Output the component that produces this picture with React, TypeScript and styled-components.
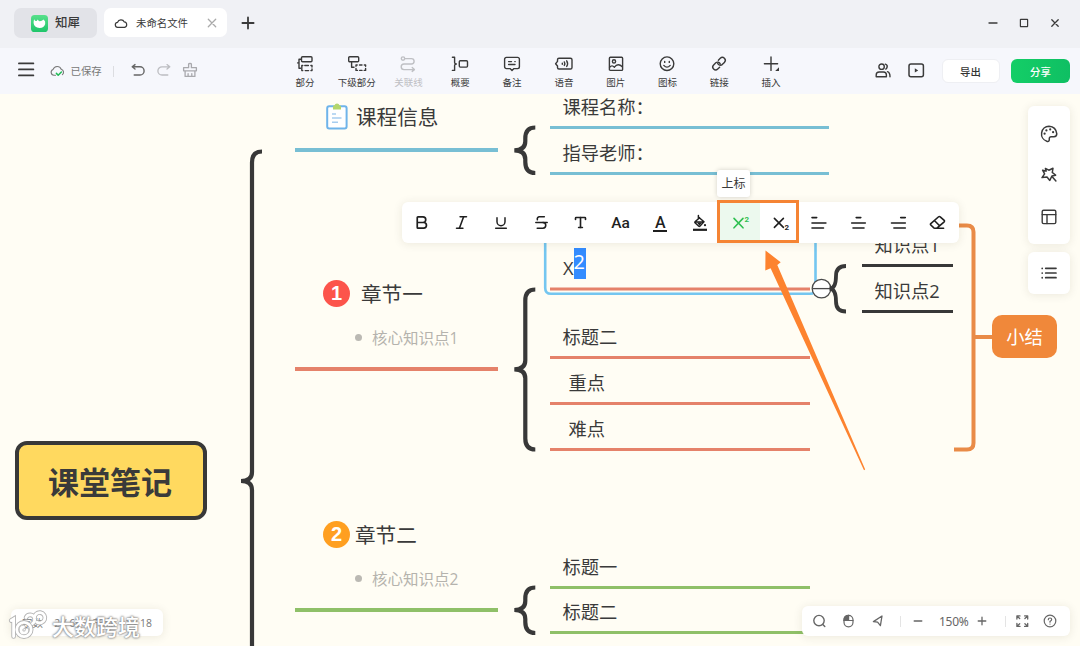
import type { ReactNode } from "react";
import styled, { createGlobalStyle } from "styled-components";
import { Bold, Italic, Strikethrough, Type, Underline } from "lucide-react";

const BLUE = "#78bfd4";
const RED = "#e5826a";
const GREEN = "#8fc068";
const DARK = "#383838";

// height of title bar + toolbar, board coordinates are window based
const BOARD_TOP = 94;

type IconProps = { w?: number; h?: number; sw?: number; children: ReactNode };

const Icon = ({ w = 20, h = 20, sw = 1.4, children }: IconProps) => (
  <svg
    width={w}
    height={h}
    viewBox={`0 0 ${w} ${h}`}
    fill="none"
    stroke="currentColor"
    strokeWidth={sw}
    strokeLinecap="round"
    strokeLinejoin="round"
  >
    {children}
  </svg>
);

const tools = [
  {
    label: "部分",
    icon: (
      <>
        <rect x="6.5" y="2.7" width="10.5" height="5" rx="1" />
        <path d="M6.3 5.2H4V14.2H5.5M3.8 8.9H2.6" />
        <path d="M7.8 11.5H6.8V16.6H7.8M9.8 11.5H13.4M15.9 11.5H17V13M17 15V16.6H15.9M10.2 16.6H13.6" />
      </>
    ),
  },
  {
    label: "下级部分",
    icon: (
      <>
        <rect x="1.7" y="2.7" width="10" height="5" rx="1" />
        <path d="M4.6 7.7V13.3H7" />
        <path d="M10.2 11H9V12.3M9 14.5V16.4H10.5M12.5 11H15M17.3 11H18.6V12.3M18.6 14.5V16.4H17.2M12.7 16.4H15" />
      </>
    ),
  },
  {
    label: "关联线",
    muted: true,
    icon: (
      <>
        <circle cx="5" cy="4.6" r="1.7" />
        <path d="M6.8 4.6H13.4A2.7 2.7 0 0 1 13.4 10H6A2.7 2.7 0 0 0 6 15.6H16.2M14.2 13.6L16.4 15.6L14.2 17.4" />
      </>
    ),
  },
  {
    label: "概要",
    icon: (
      <>
        <path d="M2.4 3.2H4.6V8.5Q4.6 10 6.4 10Q4.6 10 4.6 11.5V16.4H2.4" />
        <rect x="9.3" y="6.8" width="8.2" height="6.3" rx="1" />
      </>
    ),
  },
  {
    label: "备注",
    icon: (
      <>
        <path d="M4.4 3.4H15.6A1.8 1.8 0 0 1 17.4 5.2V12.8A1.8 1.8 0 0 1 15.6 14.6H12L10 16.6L8 14.6H4.4A1.8 1.8 0 0 1 2.6 12.8V5.2A1.8 1.8 0 0 1 4.4 3.4Z" />
        <path d="M6.6 7.6H9.5M6.6 10.5H13M12.8 7.6H13.2" />
      </>
    ),
  },
  {
    label: "语音",
    icon: (
      <>
        <path d="M5 4.2H16.4A1.6 1.6 0 0 1 18 5.8V13.4A1.6 1.6 0 0 1 16.4 15H5A1.5 1.5 0 0 1 3.5 13.5V12L1.6 9.7L3.5 7.4V5.7A1.5 1.5 0 0 1 5 4.2Z" />
        <path d="M8.3 9.1V10.3M10.3 7.9Q11.3 9.6 10.3 11.4M12.7 6.8Q14.5 9.6 12.7 12.4" />
      </>
    ),
  },
  {
    label: "图片",
    icon: (
      <>
        <rect x="3.4" y="3.2" width="13.2" height="13.2" rx="1" />
        <circle cx="8" cy="7.4" r="1.6" />
        <path d="M3.6 13.2Q6 10.5 8.4 13.2Q12 8.4 16.3 12.8" />
      </>
    ),
  },
  {
    label: "图标",
    icon: (
      <>
        <circle cx="10" cy="9.7" r="6.8" />
        <path d="M7.7 7.5V8.4M12.3 7.5V8.4M6.8 11.4Q10 14.9 13.2 11.4" />
      </>
    ),
  },
  {
    label: "链接",
    icon: (
      <g transform="rotate(-45 10 9.7)">
        <path d="M8 12.6H5.3A2.9 2.9 0 0 1 5.3 6.8H8.4A2.9 2.9 0 0 1 10.7 10.8" />
        <path d="M12 6.8H14.7A2.9 2.9 0 0 1 14.7 12.6H11.6A2.9 2.9 0 0 1 9.3 8.6" />
      </g>
    ),
  },
  {
    label: "插入",
    icon: (
      <>
        <path d="M10 3V16.4M3.4 9.7H16.6" />
        <path d="M18 13.2V17H14.2Z" fill="currentColor" stroke="none" />
      </>
    ),
  },
];

const leaves = [
  { x: 550, y: 127, w: 279, text: "课程名称：", color: BLUE },
  { x: 550, y: 173, w: 279, text: "指导老师：", color: BLUE },
  { x: 550, y: 357, w: 260, text: "标题二", color: RED },
  { x: 550, y: 403, w: 260, text: "重点", color: RED, indent: 18.5 },
  { x: 550, y: 449, w: 260, text: "难点", color: RED, indent: 18.5 },
  { x: 550, y: 587, w: 260, text: "标题一", color: GREEN },
  { x: 550, y: 632, w: 260, text: "标题二", color: GREEN },
  { x: 862, y: 265, w: 91, text: "知识点1", color: DARK },
  { x: 862, y: 311, w: 91, text: "知识点2", color: DARK },
];

const brace = (x: number, top: number, mid: number, bottom: number) =>
  `M${x + 10} ${top}Q${x} ${top} ${x} ${top + 11}V${mid - 9}Q${x} ${mid} ${x - 11} ${mid}` +
  `Q${x} ${mid} ${x} ${mid + 9}V${bottom - 11}Q${x} ${bottom} ${x + 10} ${bottom}`;

const Lines = () => (
  <LinesSvg viewBox="0 94 1080 552" fill="none">
    <g stroke={DARK} strokeWidth="4.2">
      <path d={brace(252, 151.5, 481, 810)} />
      <path d={brace(525.3, 127.5, 150.3, 173)} />
      <path d={brace(525.3, 289.5, 369.3, 449.5)} />
      <path d={brace(525.3, 587.5, 610, 633)} />
    </g>
    <path d="M954 449.5H967Q973.5 449.5 973.5 443V232Q973.5 225.5 967 225.5H955M973.5 337H993" stroke="#e98b47" strokeWidth="4" />
    <path d="M545.2 230V288Q545.2 293.8 551 293.8H810Q815.5 293.8 815.5 288V230" stroke="#74c6f0" strokeWidth="2.6" />
    <path d="M550 289H810" stroke={RED} strokeWidth="2.8" />
    <circle cx="821.5" cy="288.6" r="9.3" fill="#fff" stroke="#4a4a4a" strokeWidth="1.3" />
    <path d="M812.5 288.6H830.5" stroke="#4a4a4a" strokeWidth="1.3" />
    <path
      d="M846 266Q836 266 836 276Q836 288.6 829.5 288.6Q836 288.6 836 301.5Q836 311.5 846 311.5"
      stroke={DARK}
      strokeWidth="3.8"
    />
  </LinesSvg>
);

const Clipboard = () => (
  <svg width="22" height="27" viewBox="0 0 22 27" fill="none">
    <rect x="1.2" y="3.2" width="19.4" height="22.4" rx="2" fill="#fff" stroke="#6fb4ea" strokeWidth="2" />
    <path d="M7 6.4V3.6Q7 2.6 8.4 2.6Q9 .4 11 .4Q13 .4 13.6 2.6Q15 2.6 15 3.6V6.4Z" fill="#b4d66b" />
    <path d="M6 11H10M6 15H15.5M6 19.3H12" stroke="#a6cdf0" strokeWidth="1.5" />
  </svg>
);

function TitleBar() {
  return (
    <TitleRow>
      <HomeTab>
        <svg width="17" height="17" viewBox="0 0 17 17">
          <defs>
            <linearGradient id="logo" x1="0" y1="0" x2="0" y2="1">
              <stop offset="0" stopColor="#57e08a" />
              <stop offset="1" stopColor="#1fc56b" />
            </linearGradient>
          </defs>
          <rect width="17" height="17" rx="3.6" fill="url(#logo)" />
          <path d="M3.2 4.2Q4.2 6.8 5.9 5.8L6.7 4.5L7.9 6Q10.3 6.6 12.6 4.4Q14.8 6 14.2 9Q13 13 8.6 13Q3 12.6 2.6 8Q2.5 6 3.2 4.2Z" fill="#fff" />
        </svg>
        <b>知犀</b>
      </HomeTab>
      <FileTab>
        <Icon w={14} h={12} sw={1.2}>
          <path d="M4 10.3A2.5 2.5 0 0 1 3.6 5.3A3.6 3.6 0 0 1 10.3 4.9A2.75 2.75 0 0 1 10.6 10.3Z" />
        </Icon>
        <span>未命名文件</span>
        <Close>
          <Icon w={10} h={10} sw={1.3}>
            <path d="M1.3 1.3L8.7 8.7M8.7 1.3L1.3 8.7" />
          </Icon>
        </Close>
      </FileTab>
      <NewTab>
        <Icon w={14} h={14} sw={1.8}>
          <path d="M7 1.4V12.6M1.4 7H12.6" />
        </Icon>
      </NewTab>
      <WindowButtons>
        <Icon w={12} h={12} sw={1.3}>
          <path d="M2 6H10" />
        </Icon>
        <Icon w={12} h={12} sw={1.2}>
          <rect x="2.4" y="2.4" width="7.2" height="7.2" rx=".3" />
        </Icon>
        <Icon w={12} h={12} sw={1.3}>
          <path d="M2.8 2.8L9.2 9.2M9.2 2.8L2.8 9.2" />
        </Icon>
      </WindowButtons>
    </TitleRow>
  );
}

function Toolbar() {
  return (
    <ToolRow>
      <FileActions>
        <Icon w={18} sw={1.7}>
          <path d="M1.9 2.4H16.4M1.9 8.4H16.4M1.9 14.4H16.4" />
        </Icon>
        <Saved>
          <Icon w={16} sw={1.1}>
            <path d="M6.5 14.2H4.9A3 3 0 0 1 4.1 8.4A4.3 4.3 0 0 1 12.2 8.2A3.1 3.1 0 0 1 13.4 13.6" />
            <path d="M7.4 12.4L9.2 14.2L12.4 11" stroke="#20bb55" strokeWidth="1.5" />
          </Icon>
          <span>已保存</span>
        </Saved>
        <Separator />
        <History>
          <Icon w={16}>
            <path d="M5 3.6L2.2 5.8L5 8M2.5 5.8H10A4.1 4.1 0 0 1 10 14H4.2" />
          </Icon>
          <Faded>
            <Icon w={16} sw={1.3}>
              <path d="M11 3.6L13.8 5.8L11 8M13.5 5.8H6A4.1 4.1 0 0 0 6 14H11.8" />
            </Icon>
          </Faded>
          <Faded $dark>
            <Icon w={16} sw={1.3}>
              <path d="M6.6 6.7V3.2Q6.6 2.5 8 2.5Q9.4 2.5 9.4 3.2V6.7H14.4V9.8H1.6V6.7H6.6M3.1 9.9V15.4H12.9V9.9M6.1 15.4V12.6M9.8 15.4V12.6" />
            </Icon>
          </Faded>
        </History>
      </FileActions>
      <Tools>
        {tools.map((tool) => (
          <Tool key={tool.label} $muted={tool.muted}>
            <Icon>{tool.icon}</Icon>
            <span>{tool.label}</span>
          </Tool>
        ))}
      </Tools>
      <ShareActions>
        <Icon w={18} sw={1.4}>
          <circle cx="8.6" cy="5.7" r="2.7" />
          <path d="M3.2 15.7V13.9Q3.2 11 6.2 11H10.4Q13.4 11 13.4 13.9V15.7ZM12.4 3.1Q14.7 3.9 14.1 6.2Q13.8 7.5 12.8 8.1M14.5 10.7Q17 11.6 17 15.7" />
        </Icon>
        <Icon w={18} sw={1.5}>
          <rect x="2" y="3.1" width="14.4" height="12.6" rx="2" />
          <path d="M7.8 7.2L11.2 9.4L7.8 11.6Z" fill="currentColor" stroke="none" />
        </Icon>
        <Export>导出</Export>
        <Share>分享</Share>
      </ShareActions>
    </ToolRow>
  );
}

function FormatBar() {
  return (
    <FormatRow>
      <Format><Bold size={17} strokeWidth={2.4} /></Format>
      <Format><Italic size={17} strokeWidth={2.2} /></Format>
      <Format><Underline size={16} strokeWidth={2.2} /></Format>
      <Format><Strikethrough size={17} strokeWidth={2.2} /></Format>
      <Format><Type size={15} strokeWidth={2.6} /></Format>
      <Format>Aa</Format>
      <Format><FontColor>A</FontColor></Format>
      <Format>
        <Icon sw={1.5}>
          <path d="M8.4 2.6V5.2M8.4 4L14 8.8L9.8 13.2Q9.3 13.6 8.8 13.2L5 9.7Q4.6 9.2 5 8.8L9.6 4.8M5 9H13.4" />
          <path d="M7 9.6H12.2L9.3 12.4Z" fill="currentColor" stroke="none" />
          <circle cx="15" cy="12.2" r="1.1" fill="currentColor" stroke="none" />
          <path d="M3 16.8H17" strokeWidth="2.2" strokeLinecap="butt" />
        </Icon>
      </Format>
      <Format $active>
        <Script>
          <path d="M4 5.4L13 14.8M13 5.4L4 14.8" />
          <text x="14.6" y="8.6">2</text>
        </Script>
      </Format>
      <Format>
        <Script>
          <path d="M4.4 5.4L13.4 14.4M13.4 5.4L4.4 14.4" />
          <text x="14.6" y="16.6">2</text>
        </Script>
      </Format>
      <Format><Icon sw={1.6}><path d="M3 4.6H7.7M3 10H16.9M3 15H14.5" /></Icon></Format>
      <Format><Icon sw={1.6}><path d="M7.2 4.6H11.8M2.7 10H16.3M4 15H15" /></Icon></Format>
      <Format><Icon sw={1.6}><path d="M11.7 4.6H16.3M2.5 10H16.3M4.9 15H16.3" /></Icon></Format>
      <Format>
        <Icon sw={1.6}>
          <path d="M9.3 4L1.8 10.6Q1.1 11.3 1.8 12L4.6 14.7Q5 15.2 5.8 15.2H7.9L15.2 8.8Q15.9 8.1 15.2 7.4L11.2 3.8Q10.3 3.2 9.3 4ZM5.4 7.5L10.6 12.8M7.9 15.2H14.6" />
        </Icon>
      </Format>
    </FormatRow>
  );
}

function SidePanels() {
  return (
    <Side>
      <Panel $tall>
        <Icon sw={1.5}>
          <path d="M10 2.2A7.7 7.7 0 0 0 7.8 17.2Q10.4 18 10.3 15.4Q10 12.8 12.3 12.7H15Q17.8 12.7 17.8 9.8Q17 2.6 10 2.2Z" />
          <path d="M5.6 9.6V9.7M7.4 6.3V6.4M11.2 5.4V5.5M14.1 8.1V8.2" strokeWidth="2.2" />
        </Icon>
        <Icon sw={1.5}>
          <path d="M6.4 3.4L9.8 5.2L14 3.2L13.3 7.5L16.6 10.2L12.9 11L10.8 15.4L8 12L3 12.6L5.6 8.9L3.6 5.2L7.2 6ZM13.4 12L16.9 16" />
        </Icon>
        <Icon>
          <rect x="3.2" y="3.2" width="13.6" height="13.4" rx="1.4" />
          <path d="M3.2 7.6H16.8M8 7.6V16.6" />
        </Icon>
      </Panel>
      <Panel>
        <Icon sw={1.7}>
          <path d="M6.7 5.3H17M6.7 10H17M6.7 14.7H17M3.2 5.3V5.4M3.2 10V10.1M3.2 14.7V14.8" />
        </Icon>
      </Panel>
    </Side>
  );
}

function ZoomBar() {
  return (
    <ZoomRow>
      <Icon w={29} sw={1.4}>
        <circle cx="14" cy="9.6" r="5.2" />
        <path d="M17.8 13.4L19.8 15.4" />
      </Icon>
      <Icon w={29} sw={1.2}>
        <rect x="10" y="4.3" width="9" height="11.5" rx="4.5" />
        <path d="M10 9.5H19M14.5 4.3V9.5" />
        <path d="M10 9.5Q9.8 4.6 14.5 4.4V9.5Z" fill="currentColor" />
      </Icon>
      <Icon w={29} sw={1.3}>
        <path d="M19 5L17.4 14.6L14.6 11.2L10.4 10.6Z" />
      </Icon>
      <ZoomLevel>
        <Icon w={12} sw={1.3}><path d="M2.2 10H9.8" /></Icon>
        <span>150%</span>
        <Icon w={12} sw={1.3}><path d="M2.2 10H9.8M6 6.2V13.8" /></Icon>
      </ZoomLevel>
      <Icon w={28} sw={1.3}>
        <path d="M8.9 8V4.9H12M9.2 5.2L11.7 7.5M16.6 4.9H19.7V8M19.4 5.2L16.9 7.5M8.9 12.3V15.4H12M9.2 15.1L11.7 12.8M16.6 15.4H19.7V12.3M19.4 15.1L16.9 12.8" />
      </Icon>
      <Icon w={28} sw={1.2}>
        <circle cx="14" cy="10" r="5.8" />
        <path d="M12.3 8.7Q12.3 7 14 7Q15.7 7 15.7 8.5Q15.7 9.5 14 10.4V11.2M14 13V13.1" />
      </Icon>
    </ZoomRow>
  );
}

function App() {
  return (
    <Page>
      <GlobalStyle />
      <TitleBar />
      <Toolbar />
      <Board>
        <Lines />
        {leaves.map((leaf) => (
          <Leaf key={leaf.y} $x={leaf.x} $y={leaf.y} $w={leaf.w} $color={leaf.color} $indent={leaf.indent}>
            {leaf.text}
          </Leaf>
        ))}
        <Formula $x={563} $y={248}>
          X<mark>2</mark>
        </Formula>

        <Branch $x={295} $y={99} $h={53} $color={BLUE}>
          <BranchTitle $pad={31} $gap={8}>
            <Clipboard />
            课程信息
          </BranchTitle>
        </Branch>
        <Branch $x={295} $y={276} $h={95} $color={RED}>
          <BranchTitle $pad={28} $gap={11}>
            <Badge $color="#fc544b">1</Badge>
            章节一
          </BranchTitle>
          <Note>核心知识点1</Note>
        </Branch>
        <Branch $x={295} $y={517} $h={95} $color={GREEN}>
          <BranchTitle $pad={28} $gap={5}>
            <Badge $color="#ff9f20">2</Badge>
            章节二
          </BranchTitle>
          <Note>核心知识点2</Note>
        </Branch>
        <Root $x={15} $y={441}>课堂笔记</Root>
        <Summary $x={992} $y={315}>小结</Summary>

        <FormatBar />
        <Tooltip>上标</Tooltip>
        <Highlight />
        <Arrow viewBox="760 245 110 230">
          <path d="M765.5 250.5L780.7 262.2L777.3 265L865.2 469.6L864 470.2L770.6 268.3L765.3 270.5Z" fill="#fd832f" />
        </Arrow>
        <SidePanels />
        <Counter>
          <span>字数</span>
          <span>2 / 66</span>
          <span>节点</span>
          <span>1 / 18</span>
        </Counter>
        <Watermark>
          <svg width="42" height="34" viewBox="0 0 42 34" fill="none" strokeLinecap="round">
            {["#b4b4b4", "#fff"].map((color, i) => (
              <g key={color} stroke={color} strokeWidth={i ? 2.8 : 4.6}>
                <path d="M3.2 11.5L5.6 10V27.5" />
                <circle cx="16" cy="20.5" r="7.2" />
                <path d="M19 21A3 3 0 1 1 15.5 18" />
                <path d="M18 8.5A4.6 4.6 0 0 1 26.5 9A5.2 5.2 0 1 1 29 13.2M26.5 9Q27.3 13 24.5 14.5" />
              </g>
            ))}
          </svg>
          <span>大数跨境</span>
        </Watermark>
        <ZoomBar />
      </Board>
    </Page>
  );
}

export default App;

const GlobalStyle = createGlobalStyle`
  * {
    box-sizing: border-box;
  }
  body {
    margin: 0;
    font-family: "Open Sans", "Noto Sans CJK SC", sans-serif;
    color: #3a3a3a;
  }
  svg {
    display: block;
    flex-shrink: 0;
  }
`;

const Page = styled.div`
  display: flex;
  flex-direction: column;
  width: 1080px;
  height: 646px;
  overflow: hidden;
`;

const TitleRow = styled.header`
  display: flex;
  align-items: flex-start;
  height: 48px;
  padding: 8px 19px 0 14px;
  background: #f0f1f5;
`;

const HomeTab = styled.div`
  display: flex;
  align-items: center;
  gap: 7px;
  width: 83px;
  height: 30px;
  padding-left: 17px;
  border-radius: 7px;
  background: #e2e3e8;
  font-size: 12.5px;
  line-height: 28px;
  b {
    font-weight: 500;
  }
`;

const FileTab = styled.div`
  display: flex;
  align-items: center;
  width: 123px;
  height: 29px;
  margin-left: 7px;
  padding: 0 10px;
  border-radius: 7px;
  background: #fff;
  font-size: 10.4px;
  span {
    margin-left: 8px;
  }
`;

const Close = styled.div`
  margin-left: auto;
  color: #aaa;
`;

const NewTab = styled.div`
  margin: 8px 0 0 14px;
`;

const WindowButtons = styled.div`
  display: flex;
  gap: 19px;
  margin: 9px 0 0 auto;
`;

const ToolRow = styled.div`
  display: flex;
  align-items: center;
  height: 46px;
  padding: 0 10px 0 17px;
  background: #f6f7fc;
`;

const FileActions = styled.div`
  display: flex;
  align-items: center;
  width: 262px;
`;

const Saved = styled.div`
  display: flex;
  align-items: center;
  gap: 6px;
  margin: 0 11px 0 13.5px;
  color: #777;
  font-size: 10.4px;
  line-height: 20px;
`;

const Separator = styled.div`
  width: 1px;
  height: 11px;
  background: #dcdde1;
`;

const History = styled.div`
  display: flex;
  gap: 10px;
  margin-left: 16px;
  color: #666;
`;

const Faded = styled.div<{ $dark?: boolean }>`
  color: ${({ $dark }) => ($dark ? "#a9a9ad" : "#bcbdc1")};
`;

const Tools = styled.div`
  display: flex;
  padding-top: 2px;
`;

const Tool = styled.div<{ $muted?: boolean }>`
  display: flex;
  flex-direction: column;
  align-items: center;
  gap: 2px;
  width: 51.8px;
  color: ${({ $muted }) => ($muted ? "#bfc0c4" : "#3a3a3a")};
  font-size: 9.5px;
  line-height: 14px;
`;

const ShareActions = styled.div`
  display: flex;
  align-items: center;
  gap: 16.5px;
  margin-left: auto;
`;

const Export = styled.button`
  width: 58px;
  height: 24px;
  margin-right: -5px;
  padding: 0;
  border: 1px solid #eeeff3;
  border-radius: 6px;
  background: #fff;
  color: #333;
  font: 500 10.4px "Noto Sans CJK SC", sans-serif;
`;

const Share = styled(Export)`
  width: 59px;
  margin-right: 0;
  border: 0;
  background: linear-gradient(90deg, #14ce67, #0fbf63);
  color: #fff;
`;

const Board = styled.main`
  position: relative;
  flex: 1;
  overflow: hidden;
  background: #fffdf4;
`;

const LinesSvg = styled.svg`
  position: absolute;
  inset: 0;
  width: 1080px;
  height: 552px;
`;

type At = { $x: number; $y: number };

const Node = styled.div<At>`
  position: absolute;
  left: ${({ $x }) => $x}px;
  top: ${({ $y }) => $y - BOARD_TOP}px;
`;

const Leaf = styled(Node)<{ $w: number; $color: string; $indent?: number }>`
  width: ${({ $w }) => $w}px;
  height: 36px;
  margin-top: -34px;
  padding-left: ${({ $indent = 12.5 }) => $indent}px;
  border-bottom: 3px solid ${({ $color }) => $color};
  font-size: 18.3px;
  line-height: 28px;
  white-space: nowrap;
`;

const Formula = styled(Node)`
  display: flex;
  align-items: flex-start;
  font-size: 18.3px;
  line-height: 40px;
  mark {
    height: 31px;
    width: 12px;
    background: #338cff;
    color: #fff;
    font-size: 20px;
    line-height: 28px;
  }
`;

const Branch = styled(Node)<{ $h: number; $color: string }>`
  width: 203px;
  height: ${({ $h }) => $h}px;
  border-bottom: 4px solid ${({ $color }) => $color};
`;

const BranchTitle = styled.div<{ $pad: number; $gap: number }>`
  display: flex;
  align-items: center;
  gap: ${({ $gap }) => $gap}px;
  height: 35px;
  padding-left: ${({ $pad }) => $pad}px;
  font-size: 20.6px;
  line-height: 34px;
`;

const Badge = styled.span<{ $color: string }>`
  width: 27px;
  height: 27px;
  border-radius: 50%;
  background: ${({ $color }) => $color};
  color: #fff;
  font: bold 20px/27px "Liberation Sans", sans-serif;
  text-align: center;
`;

const Note = styled.div`
  display: flex;
  align-items: center;
  gap: 10px;
  height: 22px;
  margin: 15px 0 0 60px;
  color: #b5b3ad;
  font-size: 15.5px;
  &::before {
    content: "";
    width: 7px;
    height: 7px;
    border-radius: 50%;
    background: #bbb9b3;
  }
`;

const Root = styled(Node)`
  width: 192px;
  height: 79px;
  padding-right: 2px;
  border: 4px solid ${DARK};
  border-radius: 12px;
  background: #ffd95f;
  font-size: 31px;
  font-weight: bold;
  line-height: 74px;
  text-align: center;
`;

const Summary = styled(Node)`
  width: 65px;
  height: 43px;
  border-radius: 10px;
  background: #f0883a;
  color: #fff;
  font-size: 18.3px;
  line-height: 43px;
  text-align: center;
`;

const Floating = styled.div`
  position: absolute;
  background: #fff;
  border-radius: 6px;
  box-shadow: 0 1px 10px rgba(60, 50, 20, 0.1);
`;

const FormatRow = styled(Floating)`
  display: flex;
  left: 402px;
  top: 108px;
  height: 41px;
`;

const Format = styled.div<{ $active?: boolean }>`
  display: flex;
  align-items: center;
  justify-content: center;
  width: 39.75px;
  background: ${({ $active }) => ($active ? "#ecf9ee" : "none")};
  color: ${({ $active }) => ($active ? "#2fc052" : "#1f1f1f")};
  font: 500 15.5px Roboto, sans-serif;
`;

const FontColor = styled.span`
  width: 14px;
  margin-top: 2px;
  border-bottom: 2px solid #1f1f1f;
  font-size: 16px;
  line-height: 14px;
  text-align: center;
`;

const Script = styled.svg.attrs({ viewBox: "0 0 20 20" })`
  width: 20px;
  height: 20px;
  overflow: visible;
  fill: none;
  stroke: currentColor;
  stroke-width: 1.6;
  stroke-linecap: round;
  text {
    fill: currentColor;
    stroke: none;
    font: bold 8px Roboto, sans-serif;
  }
`;

const Tooltip = styled(Floating)`
  left: 717px;
  top: 76px;
  width: 33px;
  height: 27px;
  border-radius: 3px;
  box-shadow: 0 0 5px rgba(0, 0, 0, 0.18);
  font-size: 12px;
  line-height: 28px;
  text-align: center;
`;

const Highlight = styled.div`
  position: absolute;
  left: 717px;
  top: 106px;
  width: 82px;
  height: 43px;
  border: 3px solid #f58434;
`;

const Arrow = styled.svg`
  position: absolute;
  left: 760px;
  top: 151px;
  width: 110px;
  height: 230px;
`;

const Side = styled.aside`
  position: absolute;
  right: 10px;
  top: 12px;
  display: flex;
  flex-direction: column;
  gap: 8px;
`;

const Panel = styled(Floating)<{ $tall?: boolean }>`
  position: static;
  display: flex;
  flex-direction: column;
  align-items: center;
  justify-content: center;
  gap: 21.5px;
  width: 42px;
  height: ${({ $tall }) => ($tall ? 138 : 42)}px;
`;

const Counter = styled(Floating)`
  display: flex;
  align-items: center;
  justify-content: space-between;
  left: 11px;
  bottom: 10px;
  width: 152px;
  height: 27px;
  padding: 0 11px;
  color: #777;
  font-size: 10.4px;
`;

const Watermark = styled.div`
  position: absolute;
  left: 8px;
  bottom: 3px;
  display: flex;
  align-items: center;
  gap: 2px;
  color: #fff;
  font-size: 22px;
  font-weight: 500;
  line-height: 30px;
  text-shadow: 0 0 2px #777, 0 0 2px #999, 0 0 3px #bbb;
`;

const ZoomRow = styled(Floating)`
  display: flex;
  align-items: center;
  right: 10px;
  bottom: 10px;
  width: 268px;
  height: 30px;
  padding: 0 6px 0 3px;
  color: #666;
`;

const ZoomLevel = styled.div`
  display: flex;
  align-items: center;
  width: 106px;
  height: 11px;
  margin: 0 auto 0 8px;
  padding-left: 11px;
  border: solid #e4e4e4;
  border-width: 0 1px;
  font: 12px "Noto Sans", sans-serif;
  letter-spacing: -0.3px;
  span {
    width: 29px;
    margin: 0 8px 0 15px;
  }
`;
